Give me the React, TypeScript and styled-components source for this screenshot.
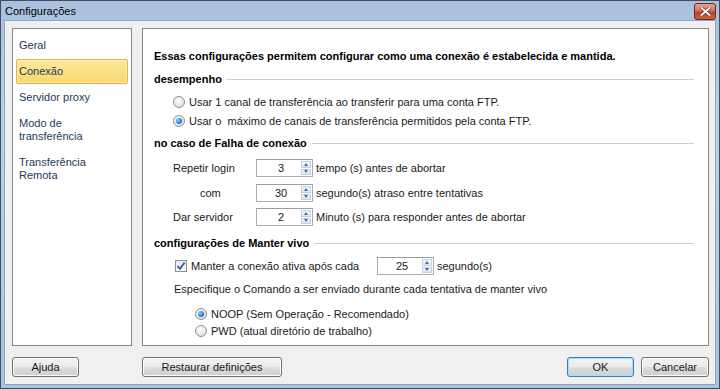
import styled, { createGlobalStyle } from "styled-components";

const GlobalStyle = createGlobalStyle`
  html, body {
    margin: 0;
    padding: 0;
    background: #ffffff;
  }
  body {
    font-family: "Liberation Sans", Arial, sans-serif;
    font-size: 11px;
    color: #000;
  }
`;

const Window = styled.div`
  width: 720px;
  height: 389px;
  box-sizing: border-box;
  border: 1px solid #434d5c;
  background: linear-gradient(180deg, #a7c1df 0%, #bcd1e9 30%, #a9c4e2 100%);
  padding: 0 3px 3px 3px;
  display: flex;
  flex-direction: column;
`;

const TitleBar = styled.div`
  height: 21px;
  display: flex;
  align-items: center;
  justify-content: space-between;
  padding: 0 0 0 1px;
`;

const Title = styled.span`
  font-size: 11px;
  color: #000;
`;

const CloseButton = styled.div`
  width: 20px;
  height: 15px;
  margin-top: 2px;
  border: 1px solid #6b2a1f;
  border-radius: 3px;
  background: linear-gradient(180deg, #e5a491 0%, #d4745b 45%, #c0422a 55%, #d0603f 100%);
  display: flex;
  align-items: center;
  justify-content: center;
`;

const Client = styled.div`
  flex: 1;
  background: #f0f0f0;
  border: 1px solid #8ea6c4;
  padding: 7px 6px 7px 7px;
  display: flex;
  flex-direction: column;
`;

const Main = styled.div`
  display: flex;
  gap: 10px;
  height: 318px;
`;

const Sidebar = styled.div`
  width: 120px;
  box-sizing: border-box;
  background: #fff;
  border: 1px solid #828790;
  padding: 4px 3px;
  display: flex;
  flex-direction: column;
  gap: 1px;
`;

const NavItem = styled.div<{ $active?: boolean }>`
  padding: 5px 2px;
  line-height: 13px;
  color: #1e395b;
  border: 1px solid ${(p) => (p.$active ? "#e0b443" : "transparent")};
  border-radius: 2px;
  background: ${(p) =>
    p.$active ? "linear-gradient(180deg, #fde99b 0%, #f9d86f 100%)" : "transparent"};
  box-shadow: ${(p) => (p.$active ? "inset 0 0 0 1px rgba(255,255,255,0.4)" : "none")};
`;

const Content = styled.div`
  flex: 1;
  box-sizing: border-box;
  background: #fff;
  border: 1px solid #828790;
  padding: 20px 14px 0 11px;
`;

const Heading = styled.div`
  font-weight: bold;
  font-size: 11px;
  line-height: 14px;
`;

const Section = styled.div<{ $top: number }>`
  display: flex;
  align-items: center;
  gap: 5px;
  margin-top: ${(p) => p.$top}px;
  font-weight: bold;
  line-height: 14px;
`;

const Rule = styled.div`
  flex: 1;
  height: 1px;
  background: #cfcfcf;
  margin-top: 1px;
`;

const OptionRow = styled.div<{ $indent: number; $top: number }>`
  display: flex;
  align-items: center;
  gap: 4px;
  padding-left: ${(p) => p.$indent}px;
  margin-top: ${(p) => p.$top}px;
  height: 14px;
  line-height: 14px;
  color: #1a1a1a;
`;

const Radio = styled.span<{ $checked?: boolean }>`
  width: 12px;
  height: 12px;
  box-sizing: border-box;
  border-radius: 50%;
  border: 1px solid #8e8f8f;
  background: radial-gradient(circle at 40% 35%, #ffffff 0%, #e6e6e6 60%, #cfcfcf 100%);
  display: inline-flex;
  align-items: center;
  justify-content: center;
  flex-shrink: 0;
  &::after {
    content: "";
    display: ${(p) => (p.$checked ? "block" : "none")};
    width: 6px;
    height: 6px;
    border-radius: 50%;
    background: radial-gradient(circle at 35% 35%, #8fd3ff 0%, #1f7ad6 60%, #0d4f9a 100%);
  }
`;

const CheckBox = styled.span`
  width: 12px;
  height: 12px;
  box-sizing: border-box;
  border: 1px solid #8e8f8f;
  background: linear-gradient(180deg, #e8e8e8 0%, #f7f7f7 100%);
  display: inline-flex;
  align-items: center;
  justify-content: center;
  flex-shrink: 0;
`;

const FieldRow = styled.div<{ $top: number }>`
  display: flex;
  align-items: center;
  margin-top: ${(p) => p.$top}px;
  padding-left: 19px;
  height: 18px;
  color: #1a1a1a;
`;

const FieldLabel = styled.span<{ $pad?: number }>`
  width: 83px;
  box-sizing: border-box;
  padding-left: ${(p) => p.$pad ?? 0}px;
`;

const Spin = styled.div`
  width: 57px;
  height: 18px;
  box-sizing: border-box;
  border: 1px solid #abadb3;
  border-top-color: #9a9ca3;
  background: #fff;
  display: flex;
  margin-right: 3px;
`;

const SpinValue = styled.span`
  flex: 1;
  text-align: center;
  line-height: 16px;
  padding-left: 4px;
`;

const SpinButtons = styled.div`
  width: 10px;
  display: flex;
  flex-direction: column;
  gap: 1px;
  padding: 1px 1px 1px 0;
`;

const SpinHalf = styled.div<{ $down?: boolean }>`
  flex: 1;
  background: linear-gradient(180deg, #f3f7fb 0%, #dbe6f3 100%);
  border: 1px solid #c5d2e2;
  display: flex;
  align-items: center;
  justify-content: center;
  &::after {
    content: "";
    width: 0;
    height: 0;
    border-left: 2.5px solid transparent;
    border-right: 2.5px solid transparent;
    ${(p) =>
      p.$down ? "border-top: 3px solid #3d6fb5;" : "border-bottom: 3px solid #3d6fb5;"}
  }
`;

const KeepRow = styled.div`
  display: flex;
  align-items: center;
  margin-top: 7px;
  padding-left: 21px;
  height: 18px;
  color: #1a1a1a;
`;

const KeepLabel = styled.span`
  width: 190px;
  box-sizing: border-box;
  padding-left: 4px;
`;

const Footer = styled.div`
  display: flex;
  align-items: center;
  margin-top: 11px;
`;

const Button = styled.button<{ $w: number; $gap?: number; $focus?: boolean }>`
  width: ${(p) => p.$w}px;
  height: 20px;
  margin-left: ${(p) => p.$gap ?? 0}px;
  box-sizing: border-box;
  font-family: "Liberation Sans", Arial, sans-serif;
  font-size: 11px;
  color: #1a1a1a;
  border: 1px solid ${(p) => (p.$focus ? "#3c7fb1" : "#707070")};
  border-radius: 3px;
  background: linear-gradient(180deg, #f2f2f2 0%, #ebebeb 50%, #dddddd 51%, #cfcfcf 100%);
  box-shadow: inset 0 0 0 1px ${(p) => (p.$focus ? "#9ce4fb" : "#fcfcfc")};
  padding: 0;
`;

const Spacer = styled.div`
  flex: 1;
`;

function SpinBox({ value }: { value: string }) {
  return (
    <Spin>
      <SpinValue>{value}</SpinValue>
      <SpinButtons>
        <SpinHalf />
        <SpinHalf $down />
      </SpinButtons>
    </Spin>
  );
}

export default function App() {
  return (
    <>
      <GlobalStyle />
      <Window>
        <TitleBar>
          <Title>Configurações</Title>
          <CloseButton>
            <svg width="11" height="9" viewBox="0 0 11 9">
              <path
                d="M1.5 1 L9.5 8 M9.5 1 L1.5 8"
                stroke="#5a1a10"
                strokeWidth="3.2"
                strokeLinecap="square"
              />
              <path
                d="M1.5 1 L9.5 8 M9.5 1 L1.5 8"
                stroke="#ffffff"
                strokeWidth="2"
                strokeLinecap="square"
              />
            </svg>
          </CloseButton>
        </TitleBar>
        <Client>
          <Main>
            <Sidebar>
              <NavItem>Geral</NavItem>
              <NavItem $active>Conexão</NavItem>
              <NavItem>Servidor proxy</NavItem>
              <NavItem>
                Modo de
                <br />
                transferência
              </NavItem>
              <NavItem>
                Transferência
                <br />
                Remota
              </NavItem>
            </Sidebar>
            <Content>
              <Heading>
                Essas configurações permitem configurar como uma conexão é estabelecida e mantida.
              </Heading>
              <Section $top={9}>
                desempenho
                <Rule />
              </Section>
              <OptionRow $indent={19} $top={9}>
                <Radio />
                Usar 1 canal de transferência ao transferir para uma conta FTP.
              </OptionRow>
              <OptionRow $indent={19} $top={5}>
                <Radio $checked />
                Usar o&nbsp; máximo de canais de transferência permitidos pela conta FTP.
              </OptionRow>
              <Section $top={8}>
                no caso de Falha de conexão
                <Rule />
              </Section>
              <FieldRow $top={9}>
                <FieldLabel>Repetir login</FieldLabel>
                <SpinBox value="3" />
                tempo (s) antes de abortar
              </FieldRow>
              <FieldRow $top={7}>
                <FieldLabel $pad={27}>com</FieldLabel>
                <SpinBox value="30" />
                segundo(s) atraso entre tentativas
              </FieldRow>
              <FieldRow $top={6}>
                <FieldLabel>Dar servidor</FieldLabel>
                <SpinBox value="2" />
                Minuto (s) para responder antes de abortar
              </FieldRow>
              <Section $top={10}>
                configurações de Manter vivo
                <Rule />
              </Section>
              <KeepRow>
                <CheckBox>
                  <svg width="10" height="10" viewBox="0 0 10 10">
                    <path
                      d="M1.5 5 L4 7.8 L8.6 1.6"
                      fill="none"
                      stroke="#2a56b8"
                      strokeWidth="1.7"
                    />
                  </svg>
                </CheckBox>
                <KeepLabel>Manter a conexão ativa após cada</KeepLabel>
                <SpinBox value="25" />
                segundo(s)
              </KeepRow>
              <OptionRow $indent={20} $top={7}>
                Especifique o Comando a ser enviado durante cada tentativa de manter vivo
              </OptionRow>
              <OptionRow $indent={41} $top={11}>
                <Radio $checked />
                NOOP (Sem Operação - Recomendado)
              </OptionRow>
              <OptionRow $indent={41} $top={3}>
                <Radio />
                PWD (atual diretório de trabalho)
              </OptionRow>
            </Content>
          </Main>
          <Footer>
            <Button $w={67}>Ajuda</Button>
            <Button $w={140} $gap={63}>
              Restaurar definições
            </Button>
            <Spacer />
            <Button $w={67} $focus>
              OK
            </Button>
            <Button $w={68} $gap={7}>
              Cancelar
            </Button>
          </Footer>
        </Client>
      </Window>
    </>
  );
}
